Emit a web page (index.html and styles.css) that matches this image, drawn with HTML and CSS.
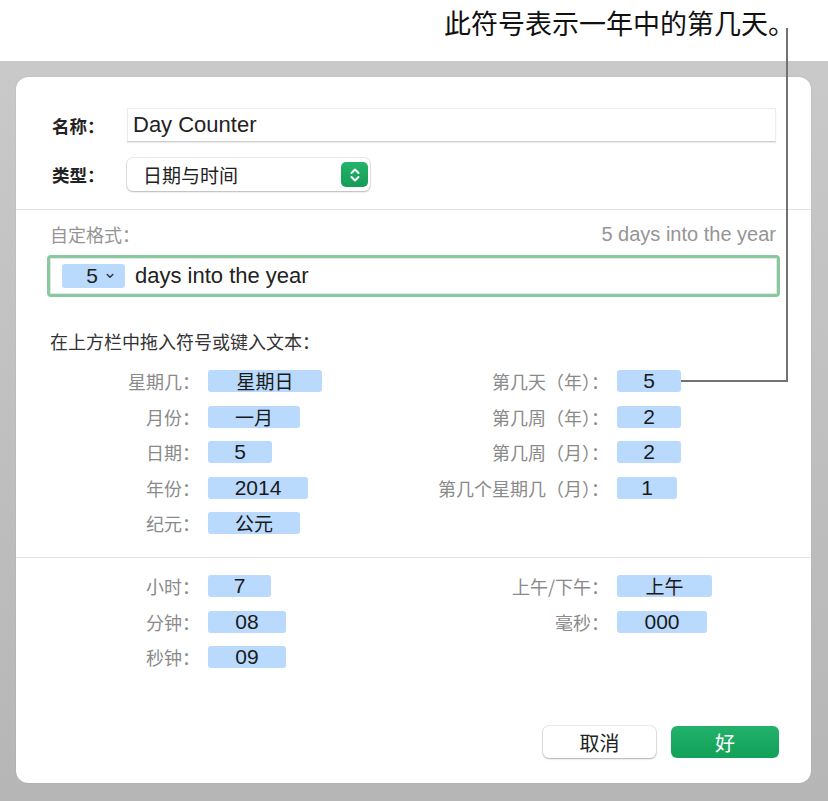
FILE: index.html
```html
<!DOCTYPE html>
<html lang="zh-CN">
<head>
<meta charset="utf-8">
<title>Day Counter</title>
<link rel="stylesheet" href="styles.css">
</head>
<body>
<div class="callout">此符号表示一年中的第几天。</div>
<svg class="leader" width="828" height="801" viewBox="0 0 828 801"><polyline points="787,28 787,381 681,381" fill="none" stroke="#727272" stroke-width="2"/></svg>
<div class="backdrop">
  <div class="dialog">
    <div class="top">
      <div class="row">
        <span class="lbl">名称：</span>
        <div class="textfield">Day Counter</div>
      </div>
      <div class="row row2">
        <span class="lbl">类型：</span>
        <div class="popup">
          <span>日期与时间</span>
          <span class="stepper"><svg width="12" height="18" viewBox="0 0 12 18"><polyline points="2.5,7 6,3.5 9.5,7" fill="none" stroke="#fff" stroke-width="2" stroke-linecap="round" stroke-linejoin="round"/><polyline points="2.5,11 6,14.5 9.5,11" fill="none" stroke="#fff" stroke-width="2" stroke-linecap="round" stroke-linejoin="round"/></svg></span>
        </div>
      </div>
    </div>
    <div class="sep"></div>
    <div class="custom">
      <div class="custom-head"><span class="cjk">自定格式：</span><span>5 days into the year</span></div>
      <div class="formatfield">
        <span class="ftoken">5<svg width="8" height="6" viewBox="0 0 8 6"><polyline points="1.2,1.5 4,4.3 6.8,1.5" fill="none" stroke="#333" stroke-width="1.4" stroke-linecap="round" stroke-linejoin="round"/></svg></span>
        <span class="ftext">days into the year</span>
      </div>
      <div class="hint">在上方栏中拖入符号或键入文本：</div>
    </div>
    <div class="grid date">
      <span class="glbl">星期几：</span><span class="tok cjk w114">星期日</span><span class="glbl">第几天（年）：</span><span class="tok w64">5</span>
      <span class="glbl">月份：</span><span class="tok cjk w92">一月</span><span class="glbl">第几周（年）：</span><span class="tok w64">2</span>
      <span class="glbl">日期：</span><span class="tok w64">5</span><span class="glbl">第几周（月）：</span><span class="tok w64">2</span>
      <span class="glbl">年份：</span><span class="tok w100">2014</span><span class="glbl">第几个星期几（月）：</span><span class="tok w60">1</span>
      <span class="glbl">纪元：</span><span class="tok cjk w92">公元</span><span></span><span></span>
    </div>
    <div class="sep"></div>
    <div class="grid time">
      <span class="glbl">小时：</span><span class="tok w63">7</span><span class="glbl">上午/下午：</span><span class="tok cjk w95">上午</span>
      <span class="glbl">分钟：</span><span class="tok w78">08</span><span class="glbl">毫秒：</span><span class="tok w90">000</span>
      <span class="glbl">秒钟：</span><span class="tok w78">09</span><span></span><span></span>
    </div>
    <div class="buttons">
      <button class="btn cancel">取消</button>
      <button class="btn ok">好</button>
    </div>
  </div>
</div>
</body>
</html>
```
FILE: styles.css
```css
html, body {
  margin: 0;
  padding: 0;
}
body {
  width: 828px;
  height: 801px;
  overflow: hidden;
  background: #fff;
  font-family: "Liberation Sans", "Noto Sans CJK SC", sans-serif;
  color: #1e1e1e;
  position: relative;
}
.cjk {
  font-family: "Noto Sans CJK SC", sans-serif;
}
.callout {
  height: 61px;
  box-sizing: border-box;
  padding: 5px 33px 0 0;
  text-align: right;
  font-size: 27px;
  line-height: 36px;
  color: #111;
  font-family: "Noto Sans CJK SC", sans-serif;
}
.leader {
  position: absolute;
  left: 0;
  top: 0;
  pointer-events: none;
  z-index: 5;
}
.backdrop {
  height: 740px;
  box-sizing: border-box;
  padding: 16px 17px 0 16px;
  background: linear-gradient(#c9c9c9, #b6b6b6);
}
.dialog {
  height: 706px;
  background: #fff;
  border-radius: 12px;
  box-sizing: border-box;
  display: flex;
  flex-direction: column;
  box-shadow: 0 0 1px rgba(0,0,0,0.25);
}
.top {
  padding: 31px 35px 18px 36px;
}
.row {
  display: flex;
  align-items: center;
}
.row2 {
  margin-top: 16px;
}
.lbl {
  width: 75px;
  font-family: "Noto Sans CJK SC", sans-serif;
  font-weight: bold;
  font-size: 17.5px;
  color: #222;
  flex: none;
}
.textfield {
  flex: 1;
  height: 34px;
  box-sizing: border-box;
  border: 1px solid #ececec;
  border-bottom: 1px solid #cfcfcf;
  box-shadow: 0 1px 1px rgba(0,0,0,0.08);
  padding-left: 5px;
  font-size: 22px;
  line-height: 32px;
  color: #222;
}
.popup {
  width: 243px;
  height: 33px;
  box-sizing: border-box;
  border-radius: 6px;
  background: #fff;
  box-shadow: 0 0 0 1px rgba(0,0,0,0.08), 0 1px 2px rgba(0,0,0,0.22);
  display: flex;
  align-items: center;
  justify-content: space-between;
  padding: 0 2px 0 16px;
  font-family: "Noto Sans CJK SC", sans-serif;
  font-size: 19px;
  color: #222;
}
.stepper {
  width: 27px;
  height: 25px;
  border-radius: 5px;
  background: linear-gradient(#25b36b, #149c58);
  display: flex;
  align-items: center;
  justify-content: center;
}
.sep {
  height: 1px;
  background: #e3e3e3;
  flex: none;
}
.custom {
  padding: 14px 35px 0 31px;
}
.custom-head {
  display: flex;
  justify-content: space-between;
  align-items: center;
  height: 20px;
  padding-left: 3px;
  font-size: 20px;
  line-height: 20px;
  color: #959595;
}
.custom-head .cjk {
  font-size: 18px;
}
.formatfield {
  margin-top: 11px;
  margin-right: -4px;
  height: 42px;
  box-sizing: border-box;
  border: 3px solid #89c99e;
  border-radius: 4px;
  display: flex;
  align-items: center;
  padding-left: 12px;
  box-shadow: inset 0 0 0 1px #e6e6e6;
}
.ftoken {
  width: 63px;
  height: 24px;
  box-sizing: border-box;
  background: #b9d9fd;
  border-radius: 3px;
  display: flex;
  align-items: center;
  justify-content: flex-end;
  gap: 8px;
  padding-right: 11px;
  font-size: 21px;
  color: #1e1e1e;
}
.ftext {
  margin-left: 10px;
  font-size: 22px;
  color: #222;
}
.hint {
  margin-top: 34px;
  padding-left: 3px;
  font-family: "Noto Sans CJK SC", sans-serif;
  font-size: 18px;
  line-height: 20px;
  color: #333;
}
.grid {
  display: grid;
  grid-template-columns: 192px 200px 209px auto;
  grid-auto-rows: 22px;
  row-gap: 13.5px;
  align-items: center;
}
.date {
  margin-top: 19px;
  padding-bottom: 23px;
}
.time {
  padding-top: 17px;
}
.glbl {
  text-align: right;
  padding-right: 8px;
  font-family: "Noto Sans CJK SC", sans-serif;
  font-size: 18px;
  line-height: 22px;
  color: #8a8a8a;
  white-space: nowrap;
}
.tok {
  height: 22px;
  background: #b9d9fd;
  border-radius: 3px;
  text-align: center;
  font-size: 21px;
  line-height: 22px;
  color: #1a1a1a;
}
.tok.cjk {
  font-size: 19px;
}
.w60 { width: 60px; }
.w63 { width: 63px; }
.w64 { width: 64px; }
.w78 { width: 78px; }
.w90 { width: 90px; }
.w92 { width: 92px; }
.w95 { width: 95px; }
.w100 { width: 100px; }
.w114 { width: 114px; }
.buttons {
  margin-top: auto;
  padding: 0 32px 25px 0;
  display: flex;
  justify-content: flex-end;
  gap: 15px;
}
.btn {
  height: 32px;
  border: none;
  border-radius: 6px;
  font-family: "Noto Sans CJK SC", sans-serif;
  font-size: 20px;
  padding: 0;
  cursor: default;
}
.cancel {
  width: 113px;
  background: #fff;
  color: #222;
  box-shadow: 0 0 0 1px rgba(0,0,0,0.08), 0 1px 2px rgba(0,0,0,0.25);
}
.ok {
  width: 108px;
  background: linear-gradient(#22b26c, #13a058);
  color: #fff;
}
```
